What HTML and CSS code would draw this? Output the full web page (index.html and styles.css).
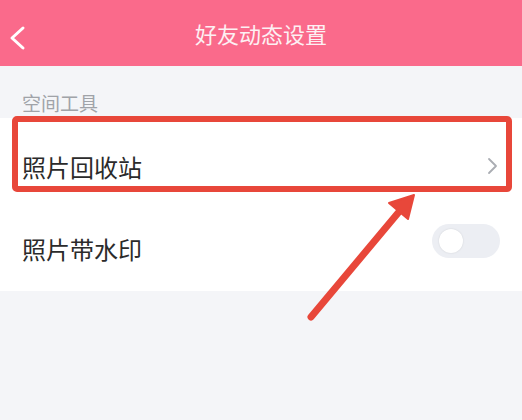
FILE: index.html
```html
<!DOCTYPE html>
<html lang="zh-CN">
<head>
    <meta charset="UTF-8">
    <meta name="viewport" content="width=device-width, initial-scale=1.0">
    <title>好友动态设置</title>
    <link rel="stylesheet" href="styles.css">
</head>
<body>
    <div class="header">
        <svg class="back" width="24" height="28" viewBox="0 0 24 28">
            <polyline points="17,4 6,14 17,24" fill="none" stroke="#fff" stroke-width="3" stroke-linecap="round" stroke-linejoin="round"/>
        </svg>
        <h1>好友动态设置</h1>
    </div>

    <div class="section-title">空间工具</div>

    <div class="list">
        <div class="row">
            <span>照片回收站</span>
            <svg class="arrow-right" width="12" height="20" viewBox="0 0 12 20">
                <polyline points="3,3 10,10 3,17" fill="none" stroke="#aaadb3" stroke-width="1.8" stroke-linecap="round" stroke-linejoin="round"/>
            </svg>
        </div>
        <div class="row">
            <span>照片带水印</span>
            <div class="switch"><div class="knob"></div></div>
        </div>
    </div>

    <!-- Annotation -->
    <div class="highlight"></div>
    <svg class="pointer" width="522" height="420" viewBox="0 0 522 420">
        <line x1="311" y1="317" x2="398" y2="213" stroke="#e8473a" stroke-width="7" stroke-linecap="round"/>
        <polygon points="414,195 389,203 408,219" fill="#e8473a" stroke="#e8473a" stroke-width="2" stroke-linejoin="round"/>
    </svg>
</body>
</html>
```

FILE: styles.css
```css
body {
    margin: 0;
    padding: 0;
    background-color: #f4f5f8;
    font-family: "Noto Sans CJK SC", "Noto Sans", sans-serif;
    color: #2b2b2b;
    position: relative;
    height: 420px;
    overflow: hidden;
}

.header {
    height: 66px;
    background-color: #fa6a8b;
    display: flex;
    align-items: center;
    justify-content: center;
    position: relative;
}

.header h1 {
    margin: 0;
    font-size: 22px;
    font-weight: normal;
    color: #fdf0f3;
}

.back {
    position: absolute;
    left: 6px;
    top: 24px;
}

.section-title {
    height: 52px;
    display: flex;
    align-items: flex-end;
    box-sizing: border-box;
    padding: 0 22px 2px;
    font-size: 19px;
    color: #a0a3a8;
}

.list {
    background-color: #fff;
    padding-top: 7px;
    padding-bottom: 2px;
}

.row {
    height: 82px;
    display: flex;
    align-items: center;
    justify-content: space-between;
    padding: 0 22px;
    font-size: 24px;
}

.arrow-right {
    margin-right: 2px;
}

.switch {
    width: 68px;
    height: 34px;
    border-radius: 17px;
    background-color: #eceef3;
    display: flex;
    align-items: center;
    padding-left: 7px;
    box-sizing: border-box;
    margin-bottom: 14px;
}

.knob {
    width: 24px;
    height: 24px;
    border-radius: 50%;
    background-color: #fff;
    box-shadow: 0 0 2px rgba(0, 0, 0, 0.12);
}

.highlight {
    position: absolute;
    left: 12px;
    top: 116px;
    width: 500px;
    height: 76px;
    border: 6px solid #e8473a;
    border-radius: 5px;
    box-sizing: border-box;
}

.pointer {
    position: absolute;
    left: 0;
    top: 0;
}
```
